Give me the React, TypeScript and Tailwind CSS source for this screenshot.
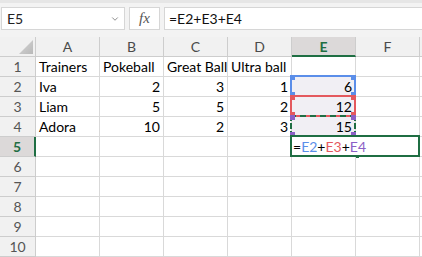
import { ChevronDown } from "lucide-react";

const cols = ["A", "B", "C", "D", "E", "F"];

type Cell = { v: string; num?: boolean };

const data: Cell[][] = [
  [{ v: "Trainers" }, { v: "Pokeball" }, { v: "Great Ball" }, { v: "Ultra ball" }, { v: "" }, { v: "" }],
  [{ v: "Iva" }, { v: "2", num: true }, { v: "3", num: true }, { v: "1", num: true }, { v: "6", num: true }, { v: "" }],
  [{ v: "Liam" }, { v: "5", num: true }, { v: "5", num: true }, { v: "2", num: true }, { v: "12", num: true }, { v: "" }],
  [{ v: "Adora" }, { v: "10", num: true }, { v: "2", num: true }, { v: "3", num: true }, { v: "15", num: true }, { v: "" }],
];

const font = { fontFamily: "Lato, 'Open Sans', sans-serif" };

const Handles = ({ color }: { color: string }) => (
  <>
    <span className={`absolute -left-[2px] -top-[2px] w-[5px] h-[5px] ${color}`} />
    <span className={`absolute -right-[2px] -top-[2px] w-[5px] h-[5px] ${color}`} />
    <span className={`absolute -left-[2px] -bottom-[2px] w-[5px] h-[5px] ${color}`} />
    <span className={`absolute -right-[2px] -bottom-[2px] w-[5px] h-[5px] ${color}`} />
  </>
);

const RefBox = ({ row }: { row: number }) => {
  if (row === 1)
    return (
      <div className="absolute -left-[2px] -top-[2px] w-[66px] h-[22px] border-2 border-[#5b8ee9] z-10">
        <Handles color="bg-[#5b8ee9]" />
      </div>
    );
  if (row === 2)
    return (
      <div className="absolute -left-[2px] -top-[2px] w-[66px] h-[22px] border-2 border-[#e4595e] z-20">
        <Handles color="bg-[#e4595e]" />
      </div>
    );
  if (row === 3)
    return (
      <div className="absolute -left-[2px] -top-[2px] w-[66px] h-[22px] border-2 border-dashed border-[#1f6e43] z-30">
        <Handles color="bg-[#8c5fc6]" />
      </div>
    );
  return null;
};

export default function App() {
  return (
    <div className="w-[422px] h-[257px] bg-white overflow-hidden select-none" style={font}>
      {/* formula bar */}
      <div className="h-[37px] bg-[#f3f3f3] border-t-[3px] border-[#e6e6e6] flex items-start pt-[4px] pl-[1px] gap-[4px]">
        <div className="w-[124px] h-[23px] bg-white border border-[#d6d6d6] flex items-center justify-between pl-[5px] pr-[4px] text-[14px] text-[#222]">
          <span>E5</span>
          <ChevronDown size={10} strokeWidth={2} className="text-[#777]" />
        </div>
        <div className="w-[31px] h-[23px] bg-white border border-[#d6d6d6] flex items-center justify-center text-[15px] text-[#555] italic" style={{ fontFamily: "'Liberation Serif', serif" }}>
          fx
        </div>
        <div className="flex-1 h-[23px] bg-white border border-[#d6d6d6] border-r-0 flex items-center pl-[4px] text-[14px] text-[#111]">
          =E2+E3+E4
        </div>
      </div>

      {/* grid */}
      <div className="grid grid-cols-[36px_repeat(6,64px)_1fr]">
        {/* header row */}
        <div className="h-[20px] bg-[#f1f1f1] border-r border-b border-[#cdcdcd] relative">
          <svg className="absolute left-0 top-0" width="36" height="20" viewBox="0 0 36 20">
            <defs>
              <linearGradient id="tri" x1="0" y1="0" x2="1" y2="1">
                <stop offset="0" stopColor="#d6d6d6" />
                <stop offset="1" stopColor="#b9b9b9" />
              </linearGradient>
            </defs>
            <polygon points="33,3 33,17 19,17" fill="url(#tri)" />
          </svg>
        </div>
        {cols.map((c) =>
          c === "E" ? (
            <div key={c} className="h-[20px] bg-[#dcd9d9] border-r border-[#cdcdcd] border-b-2 border-b-[#1f6e43] flex items-center justify-center text-[14px] font-bold text-[#1f6e43]">
              {c}
            </div>
          ) : (
            <div key={c} className="h-[20px] bg-[#f1f1f1] border-r border-b border-[#cdcdcd] flex items-center justify-center text-[14px] text-[#4a4a4a]">
              {c}
            </div>
          )
        )}
        <div className="h-[20px] bg-[#f1f1f1] border-b border-[#cdcdcd]" />

        {Array.from({ length: 10 }).map((_, r) => {
          const rowData = data[r];
          const isSel = r === 4;
          return (
            <div key={r} className="contents">
              {isSel ? (
                <div className="h-[20px] bg-[#dcd9d9] border-r-2 border-r-[#1f6e43] border-b border-b-[#cdcdcd] flex items-center justify-center text-[14px] font-bold text-[#1f6e43]">
                  {r + 1}
                </div>
              ) : (
                <div className="h-[20px] bg-[#f1f1f1] border-r border-b border-[#cdcdcd] flex items-center justify-center text-[14px] text-[#555]">
                  {r + 1}
                </div>
              )}
              {cols.map((c, ci) => {
                const cell = rowData ? rowData[ci] : undefined;
                const inRange = ci === 4 && r >= 1 && r <= 3;
                const isEdit = ci === 4 && r === 4;
                return (
                  <div
                    key={c}
                    className={`h-[20px] border-r border-b border-[#d9d9d9] relative flex items-center px-[3px] text-[14px] text-black whitespace-nowrap ${
                      cell?.num ? "justify-end" : "justify-start"
                    } ${inRange ? "bg-[#f1eff4]" : ""} ${isEdit ? "overflow-visible" : ""}`}
                  >
                    {cell && <span className="relative z-0">{cell.v}</span>}
                    {inRange && <RefBox row={r} />}
                    {isEdit && (
                      <div className="absolute -left-[2px] -top-[2px] w-[130px] h-[22px] border-2 border-[#1f6e43] bg-white z-40 flex items-center pl-[1px] text-[14px]">
                        <span className="text-black">=</span>
                        <span className="text-[#5b8ee9]">E2</span>
                        <span className="text-black">+</span>
                        <span className="text-[#e4595e]">E3</span>
                        <span className="text-black">+</span>
                        <span className="text-[#8c5fc6]">E4</span>
                        <span className="absolute left-[64px] -bottom-[3px] w-[3px] h-[3px] bg-[#1f6e43]" />
                      </div>
                    )}
                  </div>
                );
              })}
              <div className="h-[20px] border-b border-[#d9d9d9]" />
            </div>
          );
        })}
      </div>
    </div>
  );
}
